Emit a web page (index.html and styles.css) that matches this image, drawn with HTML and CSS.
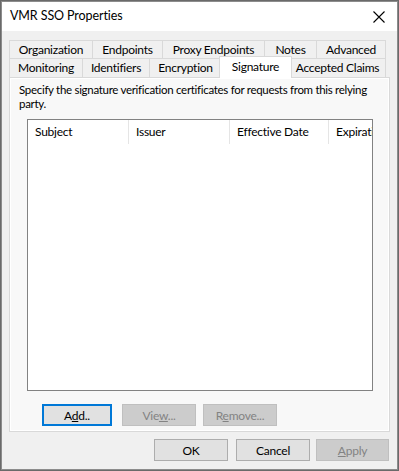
FILE: index.html
```html
<!DOCTYPE html>
<html>
<head>
<meta charset="utf-8">
<link rel="stylesheet" href="styles.css">
</head>
<body>
<div class="window">
  <div class="titlebar">
    <span class="title">VMR SSO Properties</span>
    <svg class="close" width="12" height="12" viewBox="0 0 12 12"><path d="M0.5 0.5 L11.5 11.5 M11.5 0.5 L0.5 11.5" stroke="#000" stroke-width="1.1" fill="none"/></svg>
  </div>
  <div class="body">
    <div class="tabs">
      <div class="tabrow row1">
        <div class="tab">Organization</div>
        <div class="tab">Endpoints</div>
        <div class="tab">Proxy Endpoints</div>
        <div class="tab">Notes</div>
        <div class="tab">Advanced</div>
      </div>
      <div class="tabrow row2">
        <div class="tab">Monitoring</div>
        <div class="tab">Identifiers</div>
        <div class="tab">Encryption</div>
        <div class="tab selected">Signature</div>
        <div class="tab">Accepted Claims</div>
      </div>
    </div>
    <div class="panel">
      <p class="desc">Specify the signature verification certificates for requests from this relying party.</p>
      <div class="list">
        <div class="header">
          <div class="col c1">Subject</div>
          <div class="col c2">Issuer</div>
          <div class="col c3">Effective Date</div>
          <div class="col c4">Expiration</div>
        </div>
      </div>
      <div class="actions">
        <button class="btn focused">A<u>d</u>d..</button>
        <button class="btn disabled">Vie<u>w</u>...</button>
        <button class="btn disabled">R<u>e</u>move...</button>
      </div>
    </div>
    <div class="footer">
      <button class="btn">OK</button>
      <button class="btn">Cancel</button>
      <button class="btn disabled"><u>A</u>pply</button>
    </div>
  </div>
</div>
</body>
</html>
```
FILE: styles.css
```css
* { box-sizing: border-box; }
html, body { margin: 0; padding: 0; }
body {
  width: 399px;
  height: 471px;
  font-family: "Lato", "Noto Sans", sans-serif;
  font-size: 12px;
  letter-spacing: -0.25px;
  color: #000;
  overflow: hidden;
}
.window {
  width: 399px;
  height: 471px;
  border: 1px solid #6a6a6a;
  box-shadow: inset 0 0 0 1px #8c8c8c;
  background: #f0f0f0;
  display: flex;
  flex-direction: column;
  padding: 1px;
}
.titlebar {
  height: 29px;
  background: #fff;
  display: flex;
  align-items: center;
  justify-content: space-between;
  padding: 0 12px 0 8px;
  flex: none;
}
.title { position: relative; top: -1px; font-size: 12.5px; letter-spacing: -0.1px; }
.close { display: block; }
.body {
  flex: 1;
  display: flex;
  flex-direction: column;
  padding: 9px 7px 0 7px;
}
.tabs { display: flex; flex-direction: column; width: 377px; position: relative; z-index: 2; }
.tabrow { display: grid; }
.row1 { grid-template-columns: 84px 70px 102px 52px 69px; height: 18px; }
.row2 { grid-template-columns: 74px 67px 72px 68px 96px; height: 19px; }
.tab {
  border: 1px solid #d9d9d9;
  border-bottom: none;
  margin-left: -1px;
  background: #f0f0f0;
  text-align: center;
  line-height: 17px;
  white-space: nowrap;
}
.tab:first-child { margin-left: 0; }
.tab.selected {
  background: #fff;
  margin: -2px -2px -1px -3px;
  line-height: 19px;
  position: relative;
  z-index: 3;
}
.panel {
  width: 381px;
  height: 355px;
  border: 1px solid #d9d9d9;
  box-shadow: inset 0 0 0 1px #fff;
  padding: 5px 9px 0 9px;
  display: flex;
  flex-direction: column;
  position: relative;
  z-index: 1;
  background: #f8f8f8;
}
.desc {
  margin: 0;
  line-height: 14px;
  width: 362px;
  font-size: 11.5px;
  letter-spacing: -0.3px;
}
.list {
  margin: 8px 0 0 8px;
  width: 346px;
  height: 272px;
  border: 1px solid #828282;
  background: #fff;
  overflow: hidden;
}
.header { display: flex; height: 24px; }
.col {
  flex: none;
  padding: 4px 0 0 7px;
  border-right: 1px solid #e5e5e5;
  white-space: nowrap;
  overflow: hidden;
  height: 24px;
}
.c1 { width: 101px; }
.c2 { width: 101px; }
.c3 { width: 99px; }
.c4 { width: 43px; border-right: none; }
.actions {
  display: flex;
  gap: 10px;
  margin: 13px 0 0 23px;
}
.actions .btn:nth-child(2) { margin-right: -3px; }
.btn {
  width: 74px;
  height: 22px;
  font: inherit;
  letter-spacing: inherit;
  background: #e1e1e1;
  border: 1px solid #adadad;
  padding: 0;
  color: #000;
}
.actions .btn.focused { width: 70px; border: 2px solid #0078d7; }
.btn.disabled {
  background: #cccccc;
  border-color: #bfbfbf;
  color: #838383;
}
.footer {
  display: flex;
  justify-content: flex-end;
  gap: 8px;
  padding: 7px 1px 0 0;
}
.footer .btn:nth-child(3) { width: 73px; margin-left: -2px; }
u { text-decoration: underline; text-underline-offset: 1px; }
```
